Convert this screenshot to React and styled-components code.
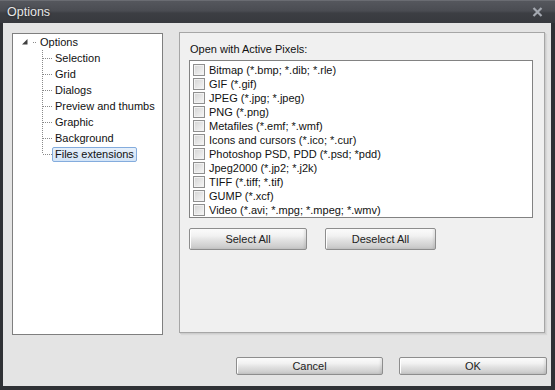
import React from 'react';
import styled, { createGlobalStyle } from 'styled-components';

const GlobalStyle = createGlobalStyle`
  html, body { margin: 0; padding: 0; overflow: hidden; background: #2f3135; }
  * { box-sizing: border-box; }
`;

const treeItems = ['Selection', 'Grid', 'Dialogs', 'Preview and thumbs', 'Graphic', 'Background', 'Files extensions'];

const formats = [
  'Bitmap (*.bmp; *.dib; *.rle)',
  'GIF (*.gif)',
  'JPEG (*.jpg; *.jpeg)',
  'PNG (*.png)',
  'Metafiles (*.emf; *.wmf)',
  'Icons and cursors (*.ico; *.cur)',
  'Photoshop PSD, PDD (*.psd; *pdd)',
  'Jpeg2000 (*.jp2; *.j2k)',
  'TIFF (*.tiff; *.tif)',
  'GUMP (*.xcf)',
  'Video (*.avi; *.mpg; *.mpeg; *.wmv)',
];

const Window = styled.div`
  width: 555px;
  height: 390px;
  display: flex;
  flex-direction: column;
  background: #2f3135;
  font-family: "Liberation Sans", Arial, sans-serif;
  font-size: 11px;
  color: #111;
`;

const TitleBar = styled.div`
  height: 23px;
  flex: none;
  display: flex;
  align-items: center;
  justify-content: space-between;
  padding: 0 12px 0 7px;
  background: linear-gradient(#55575d 0, #4a4c52 45%, #3c3e43 55%, #37393e 100%);
  border-top: 1px solid #6a6c72;
`;

const Title = styled.span`
  color: #e8e8e8;
  font-size: 12.5px;
  text-shadow: 0 0 2px #1c1d20;
`;

const Body = styled.div`
  flex: 1;
  margin: 0 4px 4px 3px;
  background: #e4e4e4;
  display: flex;
  flex-direction: column;
  padding: 9px 0 0 9px;
`;

const MainRow = styled.div`
  display: flex;
  align-items: flex-start;
  gap: 16px;
`;

const TreeBox = styled.div`
  width: 151px;
  height: 302px;
  margin-top: 1px;
  background: #fff;
  border: 1px solid #7f7f7f;
`;

const TreeRow = styled.div`
  height: 16px;
  display: flex;
  align-items: center;
  padding-left: ${p => p.$indent}px;
  white-space: nowrap;
`;

const Dots = styled.span`
  width: ${p => p.$w}px;
  height: 1px;
  flex: none;
  margin: 0 ${p => p.$mr}px 0 ${p => p.$ml}px;
  background: linear-gradient(to right, #8a8a8a 50%, transparent 50%) 0 0 / 2px 1px repeat-x;
`;

const VLine = styled.span`
  width: 1px;
  height: ${p => (p.$last ? '8px' : '16px')};
  align-self: flex-start;
  flex: none;
  background: linear-gradient(to bottom, #8a8a8a 50%, transparent 50%) 0 0 / 1px 2px repeat-y;
`;

const TreeLabel = styled.span`
  height: 15px;
  line-height: 13px;
  padding: 0 2px;
  border: 1px solid ${p => (p.$selected ? '#84acdd' : 'transparent')};
  border-radius: 2px;
  background: ${p => (p.$selected ? 'linear-gradient(#e6f0fb, #d3e4f7)' : 'transparent')};
`;

const Panel = styled.div`
  width: 366px;
  height: 301px;
  background: #f0f0f0;
  border: 1px solid #a6a6a6;
  box-shadow: 1px 1px 0 #cdcdcd, 2px 2px 1px #d8d8d8;
  padding: 9px 0 0 9px;
`;

const PanelTitle = styled.div`
  height: 14px;
  line-height: 14px;
  margin-left: 1px;
`;

const ListBox = styled.div`
  width: 344px;
  height: 158px;
  margin-top: 4px;
  background: #fff;
  border: 1px solid #828282;
  padding: 2px 0 0 3px;
`;

const CheckRow = styled.label`
  height: 14px;
  display: flex;
  align-items: center;
  gap: 4px;
  white-space: nowrap;
`;

const Box = styled.span`
  width: 12px;
  height: 12px;
  flex: none;
  border: 1px solid #8f8f8f;
  background: linear-gradient(135deg, #d4d4d4, #f7f7f7);
  box-shadow: inset 0 0 0 1px #f2f2f2;
`;

const ButtonRow = styled.div`
  display: flex;
  gap: ${p => p.$gap}px;
  margin: ${p => p.$margin};
  justify-content: ${p => p.$justify || 'flex-start'};
`;

const Button = styled.div`
  width: ${p => p.$w}px;
  height: ${p => p.$h}px;
  display: flex;
  align-items: center;
  justify-content: center;
  border: 1px solid #8d8d8d;
  border-radius: 2px;
  color: #222;
  background: linear-gradient(#fcfcfc 0, #f1f1f1 35%, #e2e2e2 55%, #d0d0d0 85%, #c4c4c4 100%);
  box-shadow: inset -2px 0 2px rgba(0, 0, 0, 0.08), inset 1px 1px 0 #fff;
`;

const Close = () => (
  <svg width="11" height="10" viewBox="0 0 11 10">
    <path d="M1.5 1 L9.5 9 M9.5 1 L1.5 9" stroke="#a4a8b0" strokeWidth="2.2" />
  </svg>
);

const Expander = () => (
  <svg width="6" height="6" viewBox="0 0 6 6">
    <polygon points="5.5,0 5.5,5.5 0,5.5" fill="#404040" />
  </svg>
);

export default function App() {
  return (
    <Window>
      <GlobalStyle />
      <TitleBar>
        <Title>Options</Title>
        <Close />
      </TitleBar>
      <Body>
        <MainRow>
          <TreeBox>
            <TreeRow $indent={9}>
              <Expander />
              <Dots $w={3} $ml={5} $mr={1} />
              <TreeLabel>Options</TreeLabel>
            </TreeRow>
            {treeItems.map((item, i) => (
              <TreeRow key={item} $indent={29}>
                <VLine $last={i === treeItems.length - 1} />
                <Dots $w={9} $ml={0} $mr={0} />
                <TreeLabel $selected={i === treeItems.length - 1}>{item}</TreeLabel>
              </TreeRow>
            ))}
          </TreeBox>
          <Panel>
            <PanelTitle>Open with Active Pixels:</PanelTitle>
            <ListBox>
              {formats.map(f => (
                <CheckRow key={f}>
                  <Box />
                  {f}
                </CheckRow>
              ))}
            </ListBox>
            <ButtonRow $gap={18} $margin="10px 0 0 0">
              <Button $w={118} $h={22}>Select All</Button>
              <Button $w={111} $h={22}>Deselect All</Button>
            </ButtonRow>
          </Panel>
        </MainRow>
        <ButtonRow $gap={16} $margin="22px 4px 0 0" $justify="flex-end">
          <Button $w={147} $h={18}>Cancel</Button>
          <Button $w={148} $h={18}>OK</Button>
        </ButtonRow>
      </Body>
    </Window>
  );
}
